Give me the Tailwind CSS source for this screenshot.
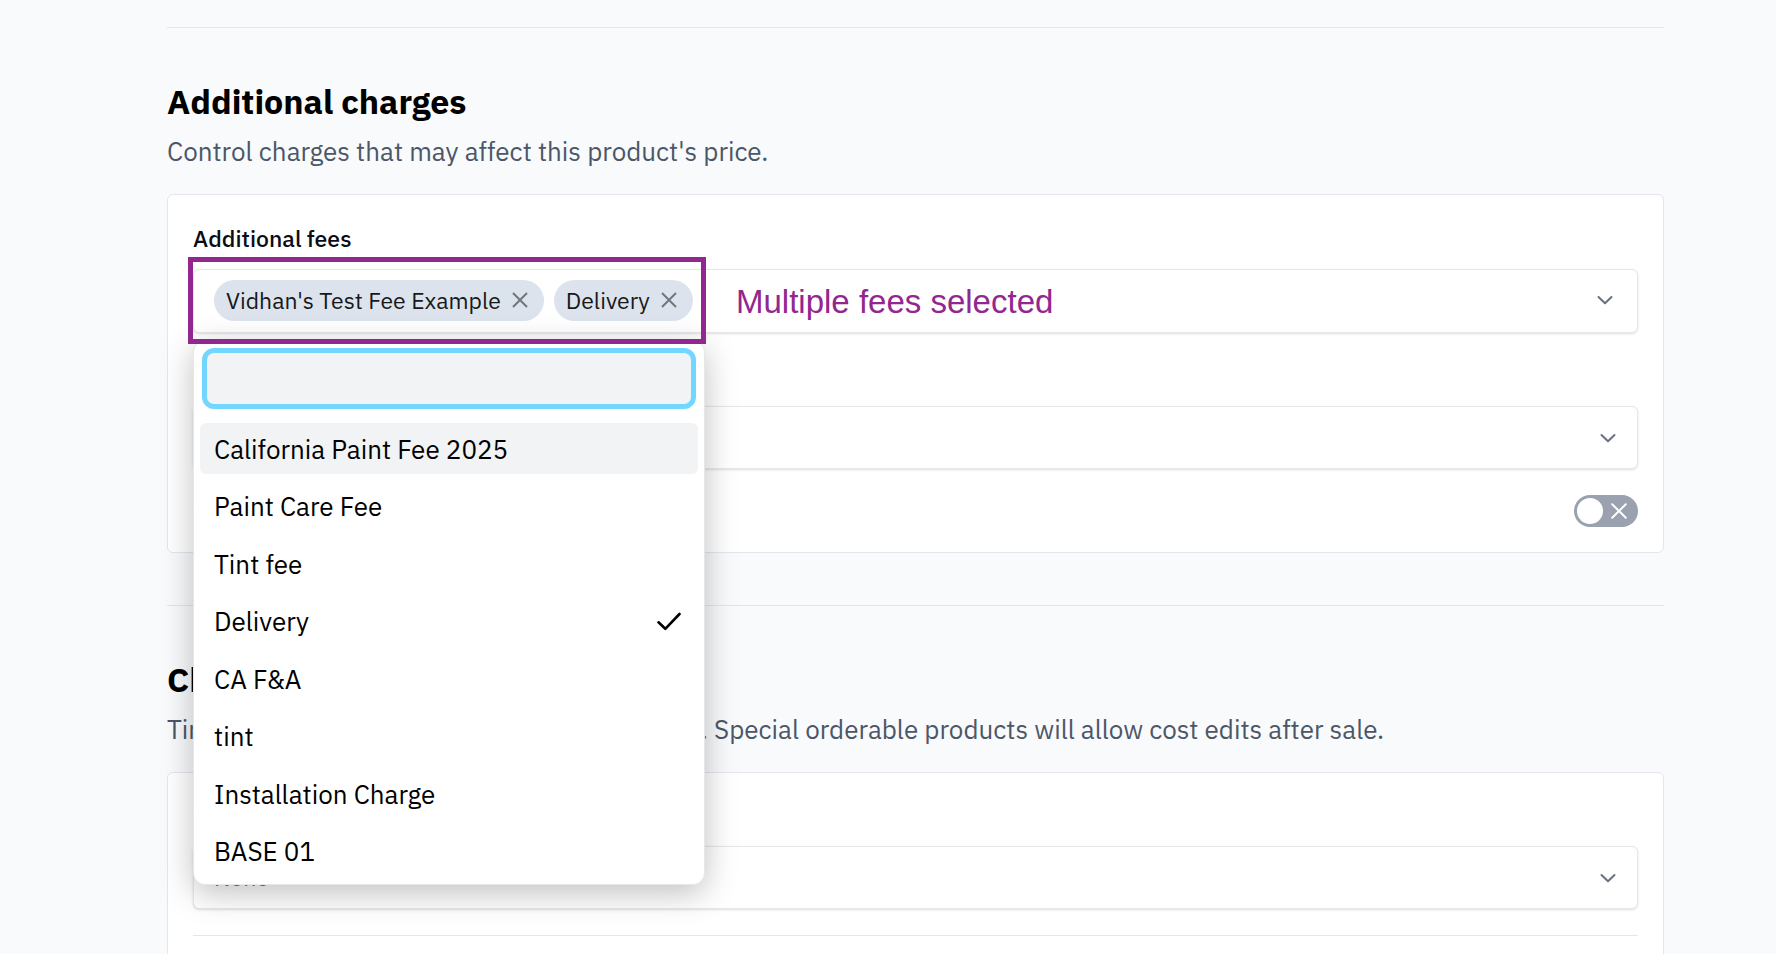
<!DOCTYPE html>
<html lang="en">
<head>
    <meta charset="UTF-8">
    <meta name="viewport" content="width=device-width, initial-scale=1.0">
    <title>Product pricing</title>
    <script src="https://cdn.jsdelivr.net/npm/@tailwindcss/browser@4"></script>
</head>
<body class="bg-[#f9fafc] font-['IBM_Plex_Sans',Roboto,sans-serif] text-black h-screen overflow-hidden">
    <main class="pt-[27px] pl-[167px] pr-[112px]">
        <hr class="border-[#e4e6eb]">

        <!-- Additional charges -->
        <section class="pt-[53px]">
            <h2 class="text-[34px] leading-[40px] font-bold">Additional charges</h2>
            <p class="mt-[14px] text-[26px] leading-[32px] text-[#4b5768]">Control charges that may affect this product's price.</p>

            <div class="mt-[27px] px-[25px] pt-[29px] pb-[25px] bg-white border border-[#e4e6eb] rounded-md">
                <label for="fee-search" class="block text-[23px] leading-[28px] font-medium text-[#0a0c16]">Additional fees</label>
                <div class="relative mt-[17px]">
                    <div class="flex items-center h-16 pl-[20px] pr-[24px] pb-[2px] bg-white border border-gray-200 rounded-md shadow-sm text-[23px] text-[#17181a]">
                        <div class="flex gap-[10px]">
                            <span class="flex items-center gap-[11px] h-[41px] pl-3 pr-4 rounded-full bg-[#dce3ed]">
                                Vidhan's Test Fee Example
                                <button type="button" aria-label="Remove Vidhan's Test Fee Example">
                                    <svg class="w-4 h-4 text-[#72767b]" viewBox="0 0 16 16" fill="none" stroke="currentColor" stroke-width="2"><path d="M1 1l14 14M15 1L1 15"/></svg>
                                </button>
                            </span>
                            <span class="flex items-center gap-[11px] h-[41px] pl-3 pr-4 rounded-full bg-[#dce3ed]">
                                Delivery
                                <button type="button" aria-label="Remove Delivery">
                                    <svg class="w-4 h-4 text-[#72767b]" viewBox="0 0 16 16" fill="none" stroke="currentColor" stroke-width="2"><path d="M1 1l14 14M15 1L1 15"/></svg>
                                </button>
                            </span>
                        </div>
                        <button type="button" class="ml-auto text-[#687082]" aria-label="Toggle fees">
                            <svg class="w-4 h-[10px]" viewBox="0 0 16 10" fill="none" stroke="currentColor" stroke-width="2" stroke-linecap="round" stroke-linejoin="round"><path d="M1.5 2L8 8.3 14.5 2"/></svg>
                        </button>
                    </div>

                    <!-- Open menu -->
                    <div class="absolute top-[71px] left-0 z-10 w-[512px] py-[7px] bg-white border border-gray-200 rounded-xl shadow-[0_8px_32px_rgba(0,0,0,0.25)]">
                        <div class="px-2">
                            <input id="fee-search" type="text" class="block w-full h-[61px] px-3 text-[26px] bg-[#f2f3f5] border-[5px] border-[#72d6ff] rounded-xl outline-none">
                        </div>
                        <div id="fee-options" role="listbox" aria-label="Additional fees" class="flex flex-col justify-between h-[454px] mt-[14px] mx-[6px]"></div>
                    </div>

                    <!-- Annotation -->
                    <div class="absolute -top-3 -left-[5px] z-20 w-[518px] h-[87px] border-[5px] border-[#92278f] pointer-events-none"></div>
                    <p class="absolute top-[14px] left-[543px] z-20 font-['Liberation_Sans',sans-serif] text-[33px] leading-[38px] text-[#92278f] whitespace-nowrap">Multiple fees selected</p>
                </div>

                <label for="tax" class="block mt-[29px] text-[23px] leading-[28px] font-medium text-[#0a0c16]">Tax category</label>
                <div class="relative mt-4">
                    <select id="tax" class="block w-full h-[63px] pl-[20px] pr-12 bg-white border border-gray-200 rounded-md shadow-sm appearance-none text-[23px] text-[#687082]">
                        <option>None</option>
                    </select>
                    <svg class="absolute right-[22px] top-1/2 -translate-y-1/2 w-4 h-[10px] text-[#687082] pointer-events-none" viewBox="0 0 16 10" fill="none" stroke="currentColor" stroke-width="2" stroke-linecap="round" stroke-linejoin="round"><path d="M1.5 2L8 8.3 14.5 2"/></svg>
                </div>

                <div class="flex items-center justify-between mt-[26px]">
                    <label for="exempt" class="text-[23px] leading-[28px] font-medium text-[#0a0c16]">Tax exempt</label>
                    <span class="relative">
                        <input id="exempt" type="checkbox" role="switch" class="block w-16 h-8 rounded-full bg-[#9aa1af] appearance-none">
                        <span class="absolute left-[3px] top-[3px] w-[26px] h-[26px] rounded-full bg-white pointer-events-none"></span>
                        <svg class="absolute right-[11px] top-2 w-4 h-4 text-white pointer-events-none" viewBox="0 0 16 16" fill="none" stroke="currentColor" stroke-width="2" stroke-linecap="round"><path d="M1.2 1.2l13.6 13.6M14.8 1.2L1.2 14.8"/></svg>
                    </span>
                </div>
            </div>
        </section>

        <hr class="mt-[52px] border-[#e4e6eb]">

        <!-- Charge settings -->
        <section class="pt-[53px]">
            <h2 class="text-[34px] leading-[40px] font-bold">Charge settings</h2>
            <p class="mt-[14px] text-[26px] leading-[32px] text-[#4b5768] whitespace-nowrap">Tint options and costs used at the time of sale. Special orderable products will allow cost edits after sale.</p>

            <div class="mt-[27px] px-[25px] pt-[29px] pb-[25px] bg-white border border-[#e4e6eb] rounded-md">
                <label for="tint" class="block text-[23px] leading-[28px] font-medium text-[#0a0c16]">Tint type</label>
                <div class="relative mt-4">
                    <select id="tint" class="block w-full h-[63px] pl-[20px] pr-12 bg-white border border-gray-200 rounded-md shadow-sm appearance-none text-[23px] text-[#687082]">
                        <option>None</option>
                    </select>
                    <svg class="absolute right-[22px] top-1/2 -translate-y-1/2 w-4 h-[10px] text-[#687082] pointer-events-none" viewBox="0 0 16 10" fill="none" stroke="currentColor" stroke-width="2" stroke-linecap="round" stroke-linejoin="round"><path d="M1.5 2L8 8.3 14.5 2"/></svg>
                </div>
                <hr class="mt-[26px] border-[#e4e6eb]">
            </div>
        </section>
    </main>

    <script>
        const fees = [
            { name: 'California Paint Fee 2025', active: true },
            { name: 'Paint Care Fee' },
            { name: 'Tint fee' },
            { name: 'Delivery', selected: true },
            { name: 'CA F&amp;A' },
            { name: 'tint' },
            { name: 'Installation Charge' },
            { name: 'BASE 01' }
        ];
        const check = '<svg class="w-6 h-[19px]" viewBox="0 0 24 19" fill="none" stroke="currentColor" stroke-width="2.6" stroke-linecap="round" stroke-linejoin="round"><path d="M1.5 10.3L8.3 16.8 22.5 2"/></svg>';

        document.getElementById('fee-options').innerHTML = fees.map(fee => `
            <button type="button" role="option" aria-selected="${!!fee.selected}" class="flex items-center justify-between h-[51px] pl-[14px] pr-[17px] rounded-md text-[26px] leading-[32px] text-left ${fee.active ? 'bg-[#f2f3f5]' : ''}">
                <span>${fee.name}</span>${fee.selected ? check : ''}
            </button>
        `).join('');
    </script>
</body>
</html>
